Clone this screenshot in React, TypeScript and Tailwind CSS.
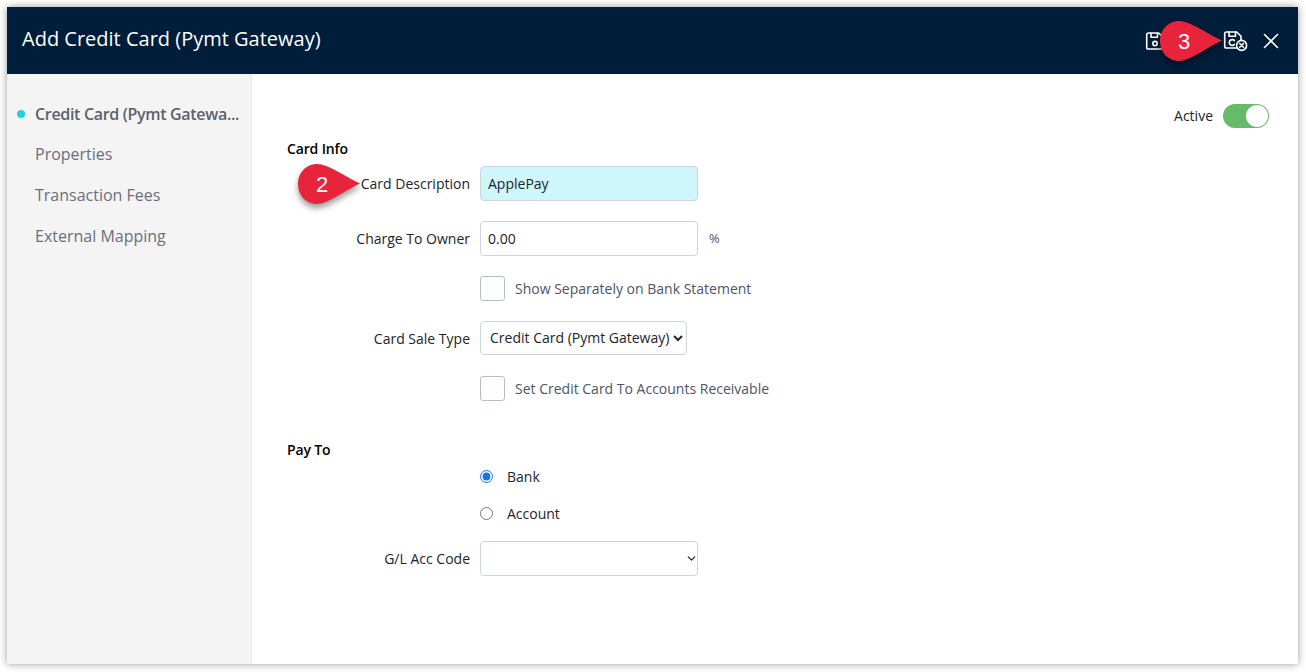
import { ChevronDown, X } from 'lucide-react'

const font = { fontFamily: '"Open Sans", sans-serif' }

const navItems = ['Properties', 'Transaction Fees', 'External Mapping']

function SaveIcon() {
  return (
    <svg width="20" height="20" viewBox="0 0 20 20" fill="none" stroke="#fff" strokeWidth="1.6" strokeLinejoin="round">
      <path d="M3.500 2h10.200L18 6.300v9.900a1.800 1.800 0 0 1-1.800 1.800H3.500a1.800 1.800 0 0 1-1.800-1.800V3.800A1.800 1.800 0 0 1 3.500 2z" />
      <path d="M6 2v4.200h6.500V2" />
      <circle cx="10" cy="12.600" r="2.200" />
    </svg>
  )
}

function SaveCloseIcon() {
  return (
    <svg width="25" height="24" viewBox="0 0 25 24" fill="none" stroke="#fff" strokeWidth="1.6" strokeLinejoin="round" strokeLinecap="round">
      <path d="M13.500 19H3.500a1.800 1.800 0 0 1-1.800-1.800V4.800A1.800 1.800 0 0 1 3.500 3h10.200L18 7.300v4" />
      <path d="M6 3v4.200h6.500V3" />
      <path d="M11.400 11.600a2.900 2.900 0 1 0 0 3.800" />
      <circle cx="18.600" cy="16.400" r="5" />
      <path d="M16.700 14.500l3.800 3.800M20.500 14.500l-3.800 3.800" />
    </svg>
  )
}

function Pin({ n, className }: { n: string; className: string }) {
  return (
    <div className={`absolute w-[64px] h-[42px] ${className}`}>
      <svg width="64" height="42" viewBox="0 0 64 42" className="absolute inset-0 drop-shadow-[0_4px_3px_rgba(0,0,0,0.4)]">
        <path d="M20 1C31 1 47 13 63 20.500C47 28 31 41 20 41C9 41 1 32 1 21C1 10 9 1 20 1z" fill="#e8243c" />
      </svg>
      <span
        className="absolute left-[2px] top-0 w-[46px] h-[42px] flex items-center justify-center text-[22px] text-white"
        style={{ fontFamily: '"Liberation Sans", sans-serif' }}
      >
        {n}
      </span>
    </div>
  )
}

function Row({ label, className = '', children }: { label?: string; className?: string; children: React.ReactNode }) {
  return (
    <div className={`flex items-center ${className}`}>
      <div className="w-[183px] mr-[10px] text-right text-[14px] text-[#212529] shrink-0">{label}</div>
      {children}
    </div>
  )
}

function Check({ label, className }: { label: string; className: string }) {
  return (
    <Row className={className}>
      <span className="w-[25px] h-[25px] rounded-[3px] border border-[#b4bfc4] bg-white" />
      <span className="ml-[10px] text-[14px] text-[#4f5467]">{label}</span>
    </Row>
  )
}

export default function App() {
  return (
    <div className="w-[1306px] h-[672px] bg-white p-[7px] pr-[8px] pb-[8px] overflow-hidden" style={font}>
      <div className="relative h-full flex flex-col bg-white shadow-[0_0_8px_rgba(0,0,0,0.4)]">

        {/* Header */}
        <div className="h-[67px] shrink-0 bg-[#001d3a] flex items-center justify-between pl-[15px] pr-[14px]">
          <h1 className="text-[20px] text-white -mt-[4px]">Add Credit Card (Pymt Gateway)</h1>
          <div className="flex items-center">
            <SaveIcon />
            <span className="w-[58px]" />
            <SaveCloseIcon />
            <X className="w-[26px] h-[26px] ml-[10px] text-white" strokeWidth={1.5} />
          </div>
        </div>

        <div className="flex flex-1 min-h-0">
          {/* Sidebar */}
          <div className="w-[245px] shrink-0 bg-[#f4f4f4] border-r border-[#ebebeb] pt-[29px]">
            <div className="relative pl-[28px] h-[22px] flex items-center">
              <span className="absolute left-[10px] top-[7px] w-[8px] h-[8px] rounded-full bg-[#1fd0e0]" />
              <span className="text-[16px] font-semibold tracking-[-0.32px] text-[#5d6170] whitespace-nowrap">Credit Card (Pymt Gatewa...</span>
            </div>
            {navItems.map((item, i) => (
              <div key={item} className={`pl-[28px] h-[22px] flex items-center text-[16px] text-[#6b6f7d] ${i === 0 ? 'mt-[18px]' : 'mt-[19px]'}`}>
                {item}
              </div>
            ))}
          </div>

          {/* Form */}
          <div className="flex-1 pl-[35px] pr-[29px] pt-[30px] text-[14px]">
            <div className="flex justify-end items-center h-[24px]">
              <span className="text-[14px] text-[#212529] mr-[10px] -mt-[1px]">Active</span>
              <span className="relative w-[46px] h-[24px] rounded-full bg-[#66bb6a]">
                <span className="absolute right-[1px] top-[1px] w-[22px] h-[22px] rounded-full bg-white" />
              </span>
            </div>

            <h2 className="mt-[11px] h-[20px] leading-[20px] text-[14px] font-semibold tracking-[-0.15px] text-black">Card Info</h2>

            <Row label="Card Description" className="mt-[7px]">
              <input
                readOnly
                value="ApplePay"
                className="w-[218px] h-[35px] px-[7px] rounded-[4px] border border-[#ced4da] bg-[#cff6fc] text-[14px] text-[#212529]"
              />
            </Row>
            <Row label="Charge To Owner" className="mt-[20px]">
              <input
                readOnly
                value="0.00"
                className="w-[218px] h-[35px] px-[7px] rounded-[4px] border border-[#ced4da] bg-white text-[14px] text-[#212529]"
              />
              <span className="ml-[11px] text-[13px] text-[#4f5467]">%</span>
            </Row>
            <Check label="Show Separately on Bank Statement" className="mt-[20px]" />
            <Row label="Card Sale Type" className="mt-[20px]">
              <select
                defaultValue="cc"
                className="w-[207px] h-[34px] pl-[5px] pb-[2px] rounded-[4px] border border-[#ced4da] bg-white text-[14px] text-[#212529]"
                style={font}
              >
                <option value="cc">Credit Card (Pymt Gateway)</option>
              </select>
            </Row>
            <Check label="Set Credit Card To Accounts Receivable" className="mt-[21px]" />

            <h2 className="mt-[39px] h-[20px] leading-[20px] text-[14px] font-semibold tracking-[-0.15px] text-black">Pay To</h2>

            <Row className="mt-[6px] h-[20px]">
              <input type="radio" name="payto" defaultChecked className="w-[13px] h-[13px] m-0 accent-[#1a73e8]" />
              <span className="ml-[14px] text-[14px] text-[#212529]">Bank</span>
            </Row>
            <Row className="mt-[17px] h-[20px]">
              <input type="radio" name="payto" className="w-[13px] h-[13px] m-0" />
              <span className="ml-[14px] text-[14px] text-[#212529]">Account</span>
            </Row>
            <Row label="G/L Acc Code" className="mt-[18px]">
              <div className="relative w-[218px] h-[35px]">
                <select className="w-full h-full appearance-none rounded-[4px] border border-[#ced4da] bg-white text-[14px]" style={font}>
                  <option value="" />
                </select>
                <ChevronDown className="absolute right-[0px] top-[11px] w-[13px] h-[13px] text-[#212529] pointer-events-none" strokeWidth={2.4} />
              </div>
            </Row>
          </div>
        </div>

        {/* Callouts */}
        <Pin n="2" className="left-[290px] top-[156px]" />
        <Pin n="3" className="left-[1152px] top-[13px]" />
      </div>
    </div>
  )
}
